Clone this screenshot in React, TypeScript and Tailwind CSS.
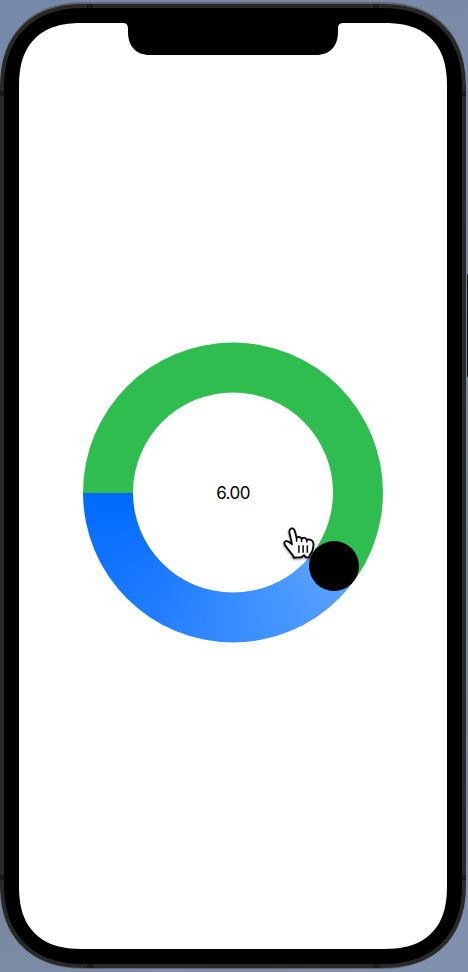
const MAX = 10;
const START_ANGLE = 270;

function Cursor() {
  return (
    <svg
      className="absolute left-[199px] top-[181px] h-[40px] w-[38px] overflow-visible [filter:drop-shadow(0_1.5px_1px_rgba(0,0,0,0.5))]"
      viewBox="0 0 36 38"
    >
      <path
        d="M11.2 32.2 C10.8 29.8 9.4 28.3 7.6 26.3 C5.7 24.4 4.8 22.7 3.1 20.4 C1.5 18.1 2.2 16.5 4 16.2 C6 16 7.5 17.5 9.4 19.3 C9.4 16.5 8.4 13.8 7.5 10.7 C6.8 8.2 6.2 5.2 8.6 4.3 C11.2 3.5 12 6 12.6 8.4 L13.8 13.4 C14.3 11.8 17.7 12 18.4 14 C20 12.4 22.9 13.2 23.4 15.2 C25 14.2 27.7 14.8 29 16.4 C30.6 18.4 29.5 23.6 28.5 26 C27.4 28.4 26.2 29.3 25.7 31.6 C23.9 32 22.8 31.9 22.2 31 L20.9 29.6 C19.5 31 18.2 31.9 16.8 31.8 C14.8 31.5 13.2 32.2 11.2 31.6 Z"
        fill="white"
        stroke="black"
        strokeWidth="1.7"
        strokeLinejoin="round"
      />
      <path
        d="M13.8 13.2V16.8 M18.6 14V17.2 M23.5 15.3V17.6 M16 20.2V27.2 M20 20.2V27.2 M24 20.2V27.2"
        stroke="black"
        strokeWidth="1.4"
      />
    </svg>
  );
}

function CircularSlider({ value }: { value: number }) {
  const angle = (START_ANGLE + (value / MAX) * 360) % 360;
  const radians = (angle * Math.PI) / 180;
  const ring = `conic-gradient(#30bd50 0deg ${angle}deg, #5ca3ff ${angle}deg, #4797ff 155deg, #3389ff 187deg, #1676ff 230deg, #006bff ${START_ANGLE}deg, #30bd50 ${START_ANGLE}deg)`;
  return (
    <div className="relative h-[300px] w-[300px]">
      <div
        className="flex h-full w-full -translate-y-[0.5px] items-center justify-center rounded-full"
        style={{ background: ring }}
      >
        <div className="flex h-[200px] w-[200px] items-center justify-center rounded-full bg-white">
          <span className="font-[Inter,'Liberation_Sans',sans-serif] text-[17px] leading-5 tracking-[-0.55px] text-black">
            {value.toFixed(2)}
          </span>
        </div>
      </div>
      <Cursor />
      <div
        className="absolute h-[50px] w-[50px] rounded-full bg-black"
        style={{ left: 125 + Math.sin(radians) * 125, top: 125 - Math.cos(radians) * 125 }}
      />
    </div>
  );
}

function Notch() {
  return (
    <svg className="h-[32px] w-[222px] shrink-0" viewBox="0 0 222 32">
      <path d="M0 0 C4.5 0 6 1.6 6 6 V9 C6 23 14 32 28 32 H194 C208 32 216 23 216 9 V6 C216 1.6 217.5 0 222 0 Z" />
    </svg>
  );
}

export default function App() {
  return (
    <main className="flex h-[972px] w-[468px] items-start overflow-hidden bg-[linear-gradient(160deg,#7589aa,#7c8ca5_30%,#778196_65%,#8091ae)] pt-[2px]">
      <div className="h-[967px] w-[466px] shrink-0 overflow-hidden rounded-[85px] bg-[#64676d] pb-px pt-[2px] [corner-shape:superellipse(1.2)]">
        <div className="h-[964px] overflow-hidden rounded-[84px] bg-[#292929] bg-[linear-gradient(90deg,transparent_87px,#1b1b1b_87px,#1b1b1b_93px,transparent_93px,transparent_373px,#1b1b1b_373px,#1b1b1b_379px,transparent_379px),linear-gradient(180deg,transparent_87px,#171717_87px,#171717_92px,transparent_92px,transparent_871px,#171717_871px,#171717_876px,transparent_876px)] p-1 [corner-shape:superellipse(1.2)]">
          <div className="h-full rounded-[80px] bg-black p-[15px] [corner-shape:superellipse(1.2)]">
            <div className="flex h-[926px] flex-col items-center overflow-hidden rounded-[64px] bg-white [corner-shape:superellipse(1.3)]">
              <Notch />
              <div className="pt-[288px]">
                <CircularSlider value={6} />
              </div>
            </div>
          </div>
        </div>
      </div>
      <div className="mt-[272px] h-[103px] w-px shrink-0 translate-x-px bg-[#171717]" />
    </main>
  );
}
